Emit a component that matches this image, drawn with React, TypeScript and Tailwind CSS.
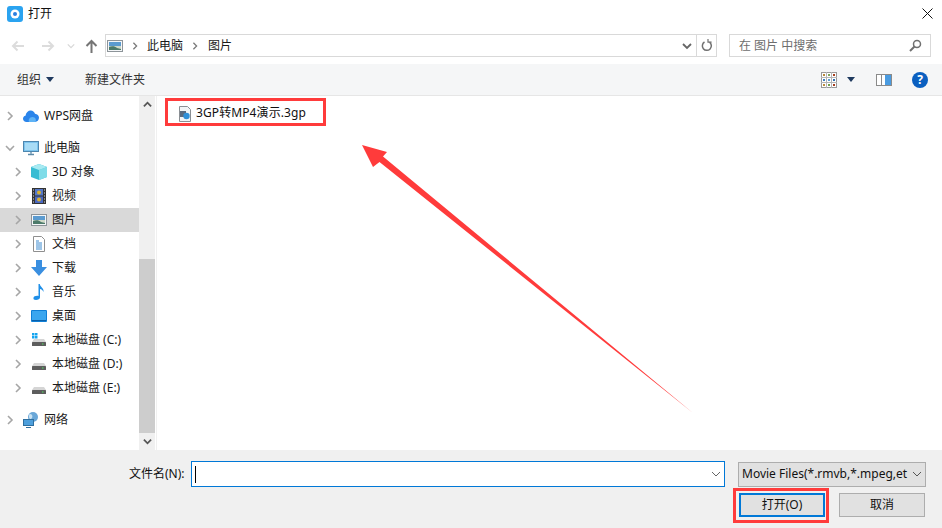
import React from "react";

const font = { fontFamily: '"Noto Sans", "Noto Sans CJK SC", sans-serif' };

const Chevron: React.FC<{ dir?: "right" | "down" | "up"; color?: string; size?: number; width?: number }> = ({
  dir = "right",
  color = "#a6a6a6",
  size = 10,
  width = 1.6,
}) => {
  const d = dir === "right" ? "M3 1l4 4-4 4" : dir === "down" ? "M1 3l4 4 4-4" : "M1 7l4-4 4 4";
  return (
    <svg width={size} height={size} viewBox="0 0 10 10" fill="none" stroke={color} strokeWidth={width}>
      <path d={d} />
    </svg>
  );
};

const PictureIcon = ({ w = 16, h = 12 }: { w?: number; h?: number }) => (
  <svg width={w} height={h} viewBox="0 0 16 12">
    <rect x="0.5" y="0.5" width="15" height="11" fill="#f4f6f8" stroke="#8d9499" />
    <rect x="2" y="2" width="12" height="5" fill="#5b9bd0" />
    <rect x="2" y="6" width="12" height="4" fill="#cfd9c8" />
    <path d="M2 7c3-1.500 6-1 8 1l4 1v1H2z" fill="#4c7a6a" />
  </svg>
);

const VideoIcon = () => (
  <svg width="14" height="16" viewBox="0 0 14 16">
    <rect width="14" height="16" fill="#333" />
    <rect x="3" y="1" width="8" height="6.500" fill="#5578c8" />
    <rect x="3" y="8.500" width="8" height="6.500" fill="#4a68c0" />
    <circle cx="7" cy="4.500" r="2" fill="#d8b030" />
    <circle cx="7" cy="11.500" r="2" fill="#d8b030" />
    <path d="M1 2h1M1 5h1M1 8h1M1 11h1M1 14h1M12 2h1M12 5h1M12 8h1M12 11h1M12 14h1" stroke="#ddd" />
  </svg>
);

const DocIcon = () => (
  <svg width="12" height="16" viewBox="0 0 12 16">
    <path d="M.5.500h8l3 3v12H.500z" fill="#fff" stroke="#8f8f8f" />
    <path d="M3 5h3M3 7h6M3 9h6M3 11h6M3 13h6" stroke="#3d8bd0" />
  </svg>
);

const CubeIcon = () => (
  <svg width="16" height="16" viewBox="0 0 16 16">
    <path d="M8 0l8 3v10l-8 3-8-3V3z" fill="#37bcd3" />
    <path d="M8 6l8-3v10l-8 3z" fill="#7fdce8" />
    <path d="M0 3l8 3 8-3-8-3z" fill="#a8eaf2" />
  </svg>
);

const DownloadIcon = () => (
  <svg width="16" height="16" viewBox="0 0 16 16">
    <path d="M5 0h6v7h5l-8 9-8-9h5z" fill="#3a8fe0" />
  </svg>
);

const MusicIcon = () => (
  <svg width="12" height="16" viewBox="0 0 12 16">
    <path d="M5.500 0h1.300c.3 3 4.500 4 3.700 8-.6-2-2.500-3-3.500-3v8.500C7 15 5 16 3 16s-2.800-1-2.500-2.300C.9 12.200 3.500 11.400 5.500 12z" fill="#1f8fe8" />
  </svg>
);

const DesktopIcon = () => (
  <svg width="16" height="12" viewBox="0 0 16 12">
    <rect width="16" height="12" rx="1" fill="#0f7fd6" />
    <rect x="1" y="1" width="14" height="9" fill="#3aa6ef" />
    <rect x="1" y="10" width="14" height="1" fill="#0a5fa8" />
  </svg>
);

const DriveIcon = ({ win = false }: { win?: boolean }) => (
  <svg width="16" height="16" viewBox="0 0 16 16">
    {win && <path d="M1 1h2.500v2.500H1zM4 1h2.500v2.500H4zM1 4h2.500v2.500H1zM4 4h2.500v2.500H4z" fill="#14a4ef" />}
    <path d="M3 7h10l2 3H1z" fill="#d5d5d5" />
    <rect x="1" y="10" width="14" height="4" rx="0.500" fill="#5d5d5d" />
    <rect x="11" y="11.500" width="1.500" height="1" fill="#50e060" />
  </svg>
);

const ComputerIcon = () => (
  <svg width="16" height="16" viewBox="0 0 16 16">
    <rect x="0.500" y="1.500" width="15" height="10" fill="#7dc4ee" stroke="#4e86ae" />
    <rect x="2" y="3" width="12" height="7" fill="#a9dcf6" />
    <path d="M5 14.500h6" stroke="#5e8aa8" strokeWidth="1.500" />
    <path d="M7 12h2v2H7z" fill="#8fb0c6" />
  </svg>
);

const CloudIcon = () => (
  <svg width="16" height="12" viewBox="0 0 16 12">
    <path d="M3.500 12C1.500 12 0 10.600 0 8.800 0 7.200 1 6.100 2.500 5.800 3 2.500 5.200.500 7.700.500c2.100 0 3.700 1.300 4.300 3.200 2.300.2 4 1.900 4 4.100S14.300 12 12 12z" fill="#2a84ea" />
    <path d="M6 12c-1-2 .5-5 3.500-5s4 3 3 5z" fill="#5fb3f5" />
  </svg>
);

const NetworkIcon = () => (
  <svg width="16" height="16" viewBox="0 0 16 16">
    <circle cx="10" cy="5" r="5" fill="#6aa7d8" />
    <path d="M7 2c2 0 3 2 2 4s-3 1-3-1 0-3 1-3z" fill="#c9e2f2" />
    <rect x="0.500" y="7.500" width="10" height="6" fill="#4d9fdc" stroke="#2f6f9f" />
    <path d="M3 15.500h5" stroke="#2f6f9f" />
  </svg>
);

const GridIcon = () => {
  const dots = ["#b8873a", "#7da35a", "#a8401f", "#3f7fc0", "#5f9fd0", "#2f6fb0", "#bc8c3c", "#6f9f4f", "#a43e20"];
  return (
    <svg width="16" height="16" viewBox="0 0 16 16">
      <rect x="0.500" y="0.500" width="15" height="15" fill="#fff" stroke="#9a9a9a" />
      <path d="M5.500 0v16M10.500 0v16M0 5.500h16M0 10.500h16" stroke="#b5b5b5" />
      {dots.map((c, i) => (
        <rect key={i} x={2 + (i % 3) * 5} y={2 + Math.floor(i / 3) * 5} width="2" height="2" fill={c} />
      ))}
    </svg>
  );
};

type NavItem = { label: string; icon: React.ReactNode; level?: number; open?: boolean; active?: boolean; gap?: boolean };

const items: NavItem[] = [
  { label: "WPS网盘", icon: <CloudIcon /> },
  { label: "此电脑", icon: <ComputerIcon />, open: true, gap: true },
  { label: "3D 对象", icon: <CubeIcon />, level: 1 },
  { label: "视频", icon: <VideoIcon />, level: 1 },
  { label: "图片", icon: <PictureIcon />, level: 1, active: true },
  { label: "文档", icon: <DocIcon />, level: 1 },
  { label: "下载", icon: <DownloadIcon />, level: 1 },
  { label: "音乐", icon: <MusicIcon />, level: 1 },
  { label: "桌面", icon: <DesktopIcon />, level: 1 },
  { label: "本地磁盘 (C:)", icon: <DriveIcon win />, level: 1 },
  { label: "本地磁盘 (D:)", icon: <DriveIcon />, level: 1 },
  { label: "本地磁盘 (E:)", icon: <DriveIcon />, level: 1 },
  { label: "网络", icon: <NetworkIcon />, gap: true },
];

const SidebarRow: React.FC<{ item: NavItem }> = ({ item }) => (
  <div className={`flex h-6 items-center ${item.active ? "bg-[#d9d9d9]" : ""} ${item.gap ? "mt-2" : ""}`}>
    <div className={`flex shrink-0 justify-center ${item.level ? "w-[31px] pl-[4px]" : "w-[23px] pr-1"}`}>
      <Chevron dir={item.open ? "down" : "right"} />
    </div>
    <div className="flex w-4 shrink-0 justify-center">{item.icon}</div>
    <span className="ml-[5px] whitespace-nowrap text-[12px] text-[#1a1a1a]">{item.label}</span>
  </div>
);

export default function App() {
  return (
    <div className="relative flex h-[528px] w-[942px] flex-col overflow-hidden bg-white" style={font}>
      {/* title bar */}
      <div className="flex h-[27px] shrink-0 items-center pl-[7px] pr-[9px]">
        <svg width="16" height="16" viewBox="0 0 16 16">
          <rect width="16" height="16" rx="3" fill="#2aa3f0" />
          <circle cx="8" cy="8" r="4.500" fill="#fff" />
          <circle cx="8" cy="8" r="2" fill="#2a7fe0" />
        </svg>
        <span className="ml-[5px] text-[12px] text-[#111]">打开</span>
        <svg className="ml-auto" width="11" height="11" viewBox="0 0 11 11" stroke="#111" fill="none">
          <path d="M.5.500l10 10M10.500.500l-10 10" />
        </svg>
      </div>

      {/* nav row */}
      <div className="flex h-[37px] shrink-0 items-start pt-[7px]">
        <div className="flex h-[23px] w-[105px] shrink-0 items-center">
          <svg className="ml-[11px]" width="14" height="12" viewBox="0 0 14 12" fill="none" stroke="#dcdcdc" strokeWidth="2">
            <path d="M13 6H2M6.500 1.500L2 6l4.500 4.500" />
          </svg>
          <svg className="ml-[16px]" width="14" height="12" viewBox="0 0 14 12" fill="none" stroke="#dcdcdc" strokeWidth="2">
            <path d="M1 6h11M7.500 1.500L12 6l-4.500 4.500" />
          </svg>
          <div className="ml-[12px]">
            <Chevron dir="down" color="#d8d8d8" size={8} />
          </div>
          <svg className="ml-[10px]" width="13" height="14" viewBox="0 0 13 14" fill="none" stroke="#757575" strokeWidth="2">
            <path d="M6.500 14V2M1.500 7l5-5 5 5" />
          </svg>
        </div>
        <div className="flex h-[23px] w-[612px] shrink-0 items-center border border-[#d9d9d9]">
          <div className="ml-[1px]">
            <PictureIcon />
          </div>
          <div className="ml-[8px]">
            <Chevron color="#7a7a7a" size={8} />
          </div>
          <span className="ml-[8px] text-[12px] text-[#1a1a1a]">此电脑</span>
          <div className="ml-[8px]">
            <Chevron color="#7a7a7a" size={8} />
          </div>
          <span className="ml-[9px] text-[12px] text-[#1a1a1a]">图片</span>
          <div className="ml-auto flex items-center">
            <Chevron dir="down" color="#666" size={10} width={1.8} />
          </div>
          <div className="ml-[4px] flex h-full w-[20px] items-center justify-center border-l border-[#d9d9d9]">
            <svg width="12" height="13" viewBox="0 0 12 13" fill="none" stroke="#707070" strokeWidth="1.500">
              <path d="M8.500 3.200A4.500 4.500 0 1 1 3.500 3" />
              <path d="M3 0v3.600h3.600" transform="translate(4 -0.500)" strokeWidth="1.200" />
            </svg>
          </div>
        </div>
        <div className="ml-3 flex h-[23px] w-[202px] shrink-0 items-center border border-[#d9d9d9] pl-[9px] pr-[8px]">
          <span className="text-[12px] text-[#6d6d6d]">在 图片 中搜索</span>
          <svg className="ml-auto" width="13" height="13" viewBox="0 0 13 13" fill="none" stroke="#707070">
            <circle cx="8" cy="5" r="3.500" strokeWidth="1.500" />
            <path d="M5.500 7.500L1 12" strokeWidth="2" />
          </svg>
        </div>
      </div>

      {/* toolbar */}
      <div className="flex h-8 shrink-0 items-center border-b border-[#e6e6e6] bg-[#f5f6f7] pl-[17px] pr-[14px]">
        <span className="text-[12px] text-[#333]">组织</span>
        <div className="ml-[5px] h-0 w-0 border-x-4 border-t-[5px] border-x-transparent border-t-[#1f3a5f]" />
        <span className="ml-[31px] text-[12px] text-[#333]">新建文件夹</span>
        <div className="ml-auto">
          <GridIcon />
        </div>
        <div className="ml-[10px] h-0 w-0 border-x-4 border-t-[5px] border-x-transparent border-t-[#1f3a5f]" />
        <div className="ml-[21px] flex h-[12px] w-4 border border-[#8a8a8a] bg-white">
          <div className="w-[5px] border-r border-[#8a8a8a]" />
          <div className="ml-auto w-[6px] bg-[#4a9be0]" />
        </div>
        <div className="ml-[20px] flex h-4 w-4 items-center justify-center rounded-full bg-[#0a5fc0] text-[12px] font-bold text-white">?</div>
      </div>

      {/* main */}
      <div className="flex h-[354px] shrink-0">
        <div className="w-[139px] shrink-0 pt-2">
          {items.map((item) => (
            <SidebarRow key={item.label} item={item} />
          ))}
        </div>
        <div className="flex w-[16px] shrink-0 flex-col bg-[#f0f0f0]">
          <div className="flex h-[17px] shrink-0 items-center justify-center">
            <Chevron dir="up" color="#555" size={9} width={2} />
          </div>
          <div className="mt-[146px] h-[174px] shrink-0 bg-[#cdcdcd]" />
          <div className="flex flex-1 items-center justify-center">
            <Chevron dir="down" color="#555" size={9} width={2} />
          </div>
        </div>
        <div className="ml-[1px] flex-1 border-l border-[#f0f0f0] pl-[22px] pt-[10px]">
          <div className="flex h-4 items-center">
            <svg width="12" height="16" viewBox="0 0 12 16">
              <path d="M.5.500h8l3 3v12H.500z" fill="#f2f4f6" stroke="#8a8f94" />
              <rect x="1" y="5" width="6" height="6" fill="#5a6a80" />
              <circle cx="7.500" cy="10" r="3.200" fill="#2f8fd8" />
            </svg>
            <span className="ml-[5px] whitespace-nowrap pb-[2px] text-[12px] tracking-[0.1px] text-[#111]">3GP转MP4演示.3gp</span>
          </div>
        </div>
      </div>

      {/* bottom */}
      <div className="flex flex-1 flex-col bg-[#f0f0f0] pt-[11px]">
        <div className="flex h-[26px] items-center">
          <span className="ml-[129px] w-[62px] shrink-0 text-[12px] text-[#111]">文件名(N):</span>
          <div className="flex h-[26px] w-[534px] shrink-0 items-center border border-[#0078d7] bg-white pl-[3px] pr-[3px]">
            <div className="h-[17px] w-px bg-black" />
            <div className="ml-auto">
              <Chevron dir="down" color="#666" size={10} width={1} />
            </div>
          </div>
          <div className="ml-[13px] flex h-[25px] w-[188px] shrink-0 items-center border border-[#adadad] bg-[#e1e1e1] pl-[3px] pr-[3px]">
            <span className="whitespace-nowrap text-[12px] text-[#111]">Movie Files(*.rmvb,*.mpeg,et</span>
            <div className="ml-auto">
              <Chevron dir="down" color="#555" size={10} width={1} />
            </div>
          </div>
        </div>
        <div className="mt-[6px] flex h-6">
          <button className="ml-[739px] h-6 w-[86px] shrink-0 border-2 border-[#0078d7] bg-[#e1e1e1] text-[12px] text-[#111]">打开(O)</button>
          <button className="ml-[14px] h-6 w-[86px] shrink-0 border border-[#adadad] bg-[#e1e1e1] text-[12px] text-[#111]">取消</button>
        </div>
      </div>

      {/* annotations */}
      <div className="absolute left-[165px] top-[98px] h-[28px] w-[161px] border-[3px] border-[#ff3b3b]" />
      <div className="absolute left-[733px] top-[488px] h-[35px] w-[96px] border-[3px] border-[#ff3b3b]" />
      <svg className="absolute left-0 top-0" width="942" height="528" viewBox="0 0 942 528">
        <polygon points="362,145 387,152 383,156.500 693,413 379.500,162 373,167" fill="#ff3b3b" />
      </svg>
    </div>
  );
}
